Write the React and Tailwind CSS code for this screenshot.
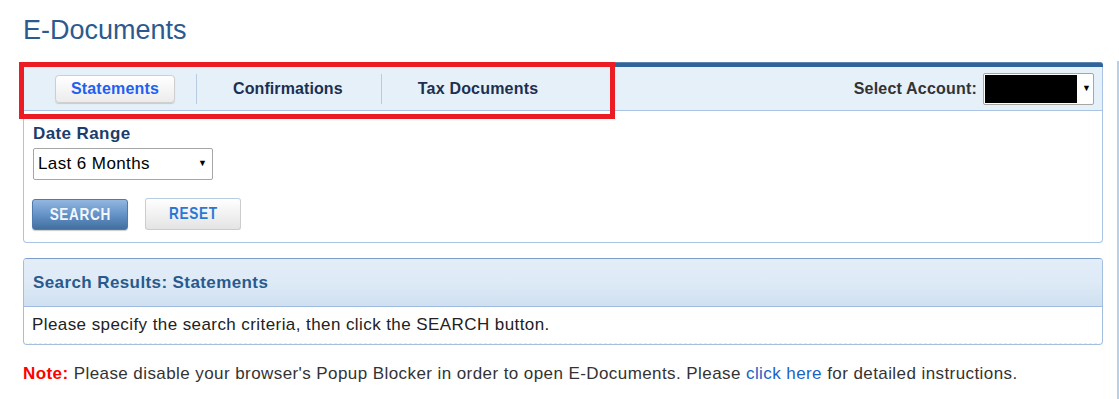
import React from "react";

export default function App() {
  return (
    <div className="relative w-[1119px] h-[399px] bg-white font-['Liberation_Sans',Arial,sans-serif] overflow-hidden">
      {/* right edge line */}
      <div className="absolute left-[1117px] top-[61px] w-[2px] h-[338px] bg-[#b9cfe8]" />

      <div className="pl-[23px] pt-[13px] w-[1103px]">
        <h1 className="text-[27px] leading-[34px] text-[#2b5b8e] font-normal">E-Documents</h1>

        {/* Filter panel */}
        <div className="relative mt-[15px]">
          <div className="h-[5px] bg-[#2f6399] rounded-tr-[3px] border-t border-[#5c84b1]" />
          <div className="border-x border-b border-[#a9c4e4] rounded-b-[4px]">
            {/* Tab bar */}
            <div className="h-[44px] bg-[#e6f0f8] border-b border-[#a9c4e4] flex items-center">
              <div className="ml-[31px] w-[120px] h-[28px] rounded-[4px] border border-[#cfcfcf] bg-gradient-to-b from-white to-[#ececec] shadow-[0_1px_1px_rgba(0,0,0,0.15)] flex items-center justify-center text-[16px] tracking-[0.2px] font-bold text-[#1f5ff2]">
                Statements
              </div>
              <div className="ml-[21px] w-px h-[30px] bg-[#b7cbe1]" />
              <div className="ml-[36px] text-[16px] tracking-[0.1px] font-bold text-[#1b2f52]">Confirmations</div>
              <div className="ml-[38px] w-px h-[30px] bg-[#b7cbe1]" />
              <div className="ml-[36px] text-[16px] tracking-[0.2px] font-bold text-[#1b2f52]">Tax Documents</div>
              <div className="ml-auto flex items-center mr-[8px]">
                <span className="text-[16px] tracking-[0.2px] font-bold text-[#333333]">Select Account:</span>
                <div className="ml-[6px] w-[111px] h-[32px] border border-[#a6a6a6] rounded-[2px] bg-white flex items-center p-px">
                  <div className="w-[92px] h-full bg-black" />
                  <span className="ml-[5px] text-[9px] text-black">▼</span>
                </div>
              </div>
            </div>

            {/* Body */}
            <div className="pl-[9px] pt-[13px] pb-[12px]">
              <div className="text-[17px] leading-[20px] tracking-[0.4px] font-bold text-[#1c3d6b]">Date Range</div>
              <div className="mt-[4px] w-[180px] h-[32px] border border-[#a6a6a6] rounded-[2px] flex items-center pl-[4px] pr-[5px]">
                <span className="text-[17px] tracking-[0.4px] text-black">Last 6 Months</span>
                <span className="ml-auto text-[9px] text-black">▼</span>
              </div>
              <div className="mt-[18px] flex items-end">
                <div className="w-[96px] h-[31px] rounded-[3px] bg-gradient-to-b from-[#93b7df] via-[#6592c8] to-[#41709f] border border-[#4f7aae] shadow-[0_1px_1px_rgba(0,0,0,0.2)] flex items-center justify-center -ml-[1px]">
                  <span className="inline-block scale-x-[0.8] text-[17px] font-bold text-[#f2f6fb] tracking-[0.8px]">SEARCH</span>
                </div>
                <div className="ml-[17px] w-[96px] h-[32px] rounded-[3px] bg-gradient-to-b from-white to-[#e4e4e4] border border-[#cccccc] border-t-[#b8cce4] flex items-center justify-center">
                  <span className="inline-block scale-x-[0.8] text-[17px] font-bold text-[#2a78d4] tracking-[0.8px]">RESET</span>
                </div>
              </div>
            </div>
          </div>

          {/* highlight annotation */}
          <div className="absolute left-[-4px] top-0 w-[596px] h-[57px] border-[5px] border-[#ec1c24] pointer-events-none" />
        </div>

        {/* Search results */}
        <div className="mt-[15px] border border-[#a3bfe0] border-t-[#7e9fca] rounded-[4px] overflow-hidden">
          <div className="h-[48px] bg-gradient-to-b from-[#e2edf8] via-[#deeaf6] to-[#cfe0f1] border-b border-[#9fbbe0] flex items-center pl-[9px]">
            <span className="text-[17px] tracking-[0.4px] font-bold text-[#2a5a8c]">Search Results: Statements</span>
          </div>
          <div className="h-[37px] flex items-center pl-[8px] border-b border-dashed border-[#e6ecf3]">
            <span className="text-[17px] tracking-[0.42px] text-[#222222]">Please specify the search criteria, then click the SEARCH button.</span>
          </div>
        </div>

        {/* Note */}
        <div className="mt-[19px] text-[17px] leading-[20px] tracking-[0.42px] text-[#333333]">
          <span className="font-bold text-[#ff0000]">Note:</span> Please disable your browser's Popup Blocker in order to open E-Documents. Please{" "}
          <span className="text-[#1a62c6]">click here</span> for detailed instructions.
        </div>
      </div>
    </div>
  );
}
